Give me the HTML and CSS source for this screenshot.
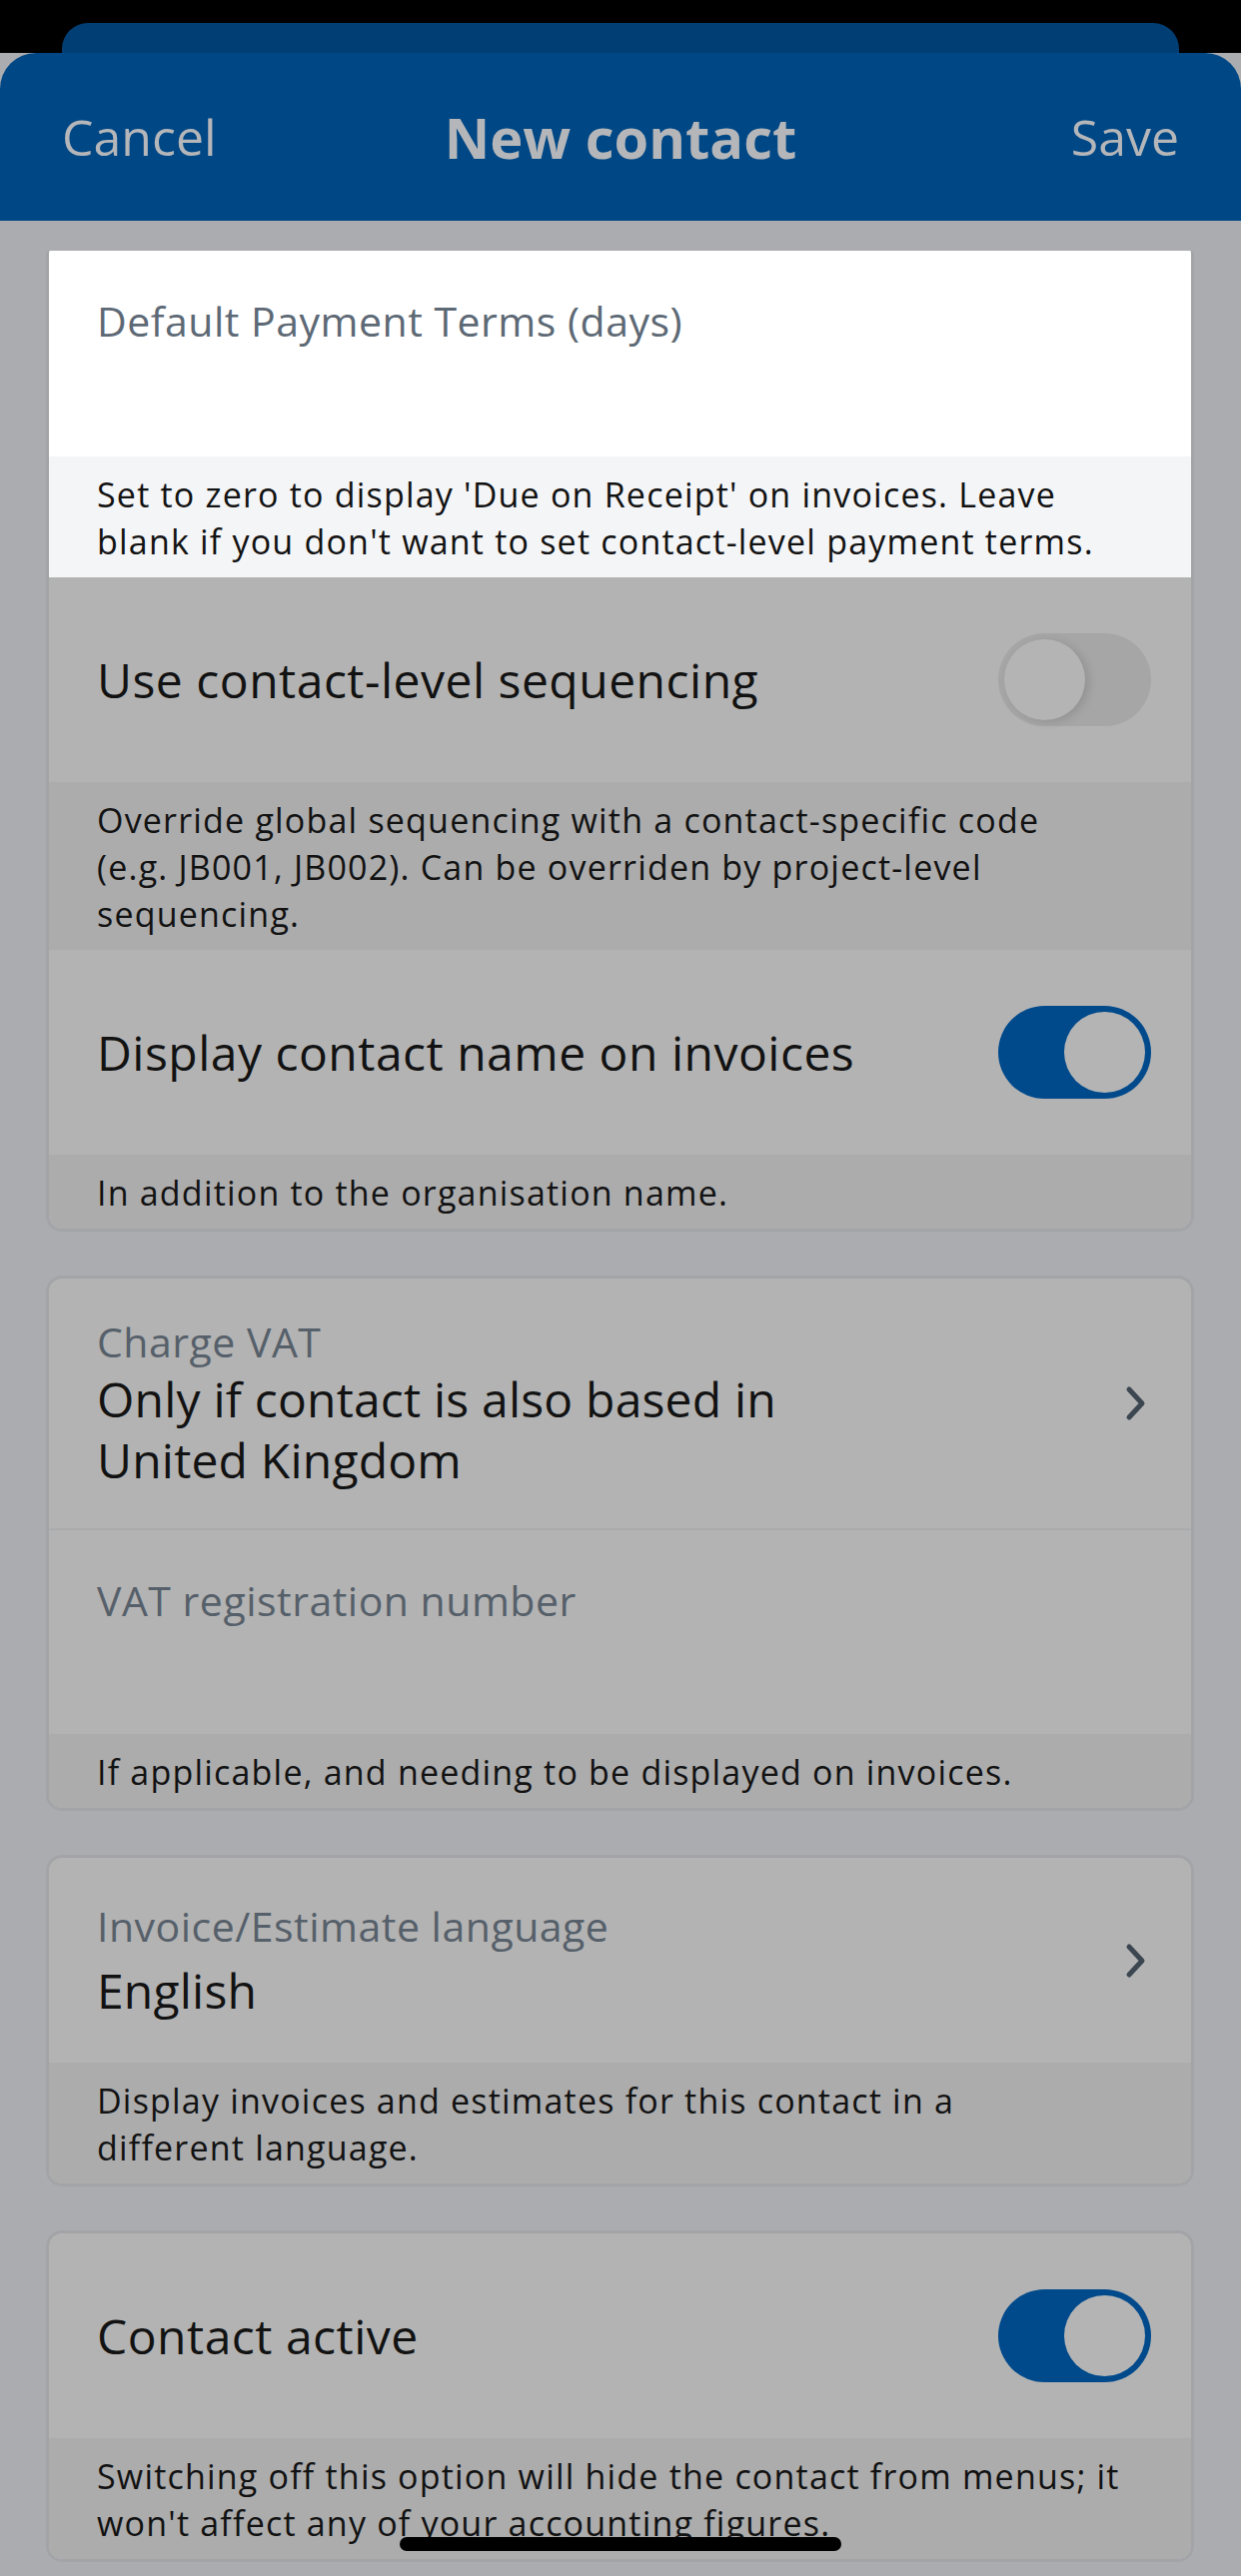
FILE: index.html
```html
<!doctype html>
<html lang="en">

<head>
  <meta charset="UTF-8" />
  <meta name="viewport" content="width=device-width, initial-scale=1.0" />
  <title>New contact</title>
  <link rel="stylesheet" href="styles.css">
</head>

<body>
  <div class="status-area">
    <div class="sheet-behind"></div>
  </div>

  <header class="nav">
    <span class="nav-btn">Cancel</span>
    <h1>New contact</h1>
    <span class="nav-btn nav-btn-end">Save</span>
  </header>

  <main class="form">
    <section class="card">
      <div class="field focused">
        <label>Default Payment Terms (days)</label>
      </div>
      <p class="hint focused">Set to zero to display 'Due on Receipt' on invoices. Leave<br>blank if you don't want to set contact-level payment terms.</p>

      <div class="row">
        <span class="row-title">Use contact-level sequencing</span>
        <span class="switch"></span>
      </div>
      <p class="hint">Override global sequencing with a contact-specific code<br>(e.g. JB001, JB002). Can be overriden by project-level<br>sequencing.</p>

      <div class="row">
        <span class="row-title">Display contact name on invoices</span>
        <span class="switch on"></span>
      </div>
      <p class="hint">In addition to the organisation name.</p>
    </section>

    <section class="card">
      <div class="row select tall">
        <div class="select-text">
          <span class="field-label">Charge VAT</span>
          <span class="select-value">Only if contact is also based in<br>United Kingdom</span>
        </div>
        <svg class="chevron" viewBox="0 0 22 36">
          <path d="M4 4l13 14L4 32" />
        </svg>
      </div>
      <div class="field divided">
        <label>VAT registration number</label>
      </div>
      <p class="hint">If applicable, and needing to be displayed on invoices.</p>
    </section>

    <section class="card">
      <div class="row select">
        <div class="select-text">
          <span class="field-label">Invoice/Estimate language</span>
          <span class="select-value">English</span>
        </div>
        <svg class="chevron" viewBox="0 0 22 36">
          <path d="M4 4l13 14L4 32" />
        </svg>
      </div>
      <p class="hint">Display invoices and estimates for this contact in a<br>different language.</p>
    </section>

    <section class="card">
      <div class="row">
        <span class="row-title">Contact active</span>
        <span class="switch on"></span>
      </div>
      <p class="hint">Switching off this option will hide the contact from menus; it<br>won't affect any of your accounting figures.</p>
    </section>
  </main>

  <div class="home-indicator"></div>
</body>

</html>
```

FILE: styles.css
```css
:root {
  --page-bg: #abacb0;
  --card-bg: #b3b3b3;
  --card-border: #a3a4a7;
  --hint-bg: #acacad;
  --nav-bg: #004785;
  --nav-behind: #003e73;
  --nav-text: #b4b6b9;
  --text: #121212;
  --label: #56606a;
  --switch-on: #004a8c;
  --switch-off: #a6a6a6;
  --knob: #b4b4b4;
}

* {
  margin: 0;
  padding: 0;
  box-sizing: border-box;
}

html {
  background: var(--page-bg);
}

body {
  width: 1242px;
  min-height: 2579px;
  font-family: "Open Sans", Lato, sans-serif;
  color: var(--text);
  background: var(--page-bg);
  position: relative;
  overflow: hidden;
}

/* black strip with the card stacked behind the sheet */
.status-area {
  height: 53px;
  background: #000;
  padding: 23px 62px 0;
}

.sheet-behind {
  height: 60px;
  background: var(--nav-behind);
  border-radius: 26px 26px 0 0;
}

.nav {
  position: relative;
  height: 168px;
  background: var(--nav-bg);
  border-radius: 36px 36px 0 0;
  display: grid;
  grid-template-columns: 1fr auto 1fr;
  align-items: center;
  padding: 0 62px;
  color: var(--nav-text);
}

.nav h1 {
  font-size: 56px;
  font-weight: 700;
}

.nav-btn {
  font-size: 50px;
  font-weight: 400;
}

.nav-btn-end {
  justify-self: end;
}

.form {
  display: flex;
  flex-direction: column;
  gap: 44px;
  padding: 30px 47px 0 46px;
}

.card {
  background: var(--card-bg);
  border: 3px solid var(--card-border);
  border-radius: 16px;
  overflow: hidden;
}

.card:first-child {
  border-top: none;
  border-radius: 4px 4px 16px 16px;
}

.field {
  height: 206px;
  padding: 45px 36px 0 48px;
}

.field label,
.field-label {
  display: block;
  font-size: 41px;
  line-height: 50px;
  letter-spacing: 0.5px;
  color: var(--label);
}

.field.focused {
  background: #fff;
}

.field.focused label {
  color: #5d6975;
}

.field.divided {
  border-top: 2px solid #aaabad;
}

.hint {
  background: var(--hint-bg);
  font-size: 34px;
  line-height: 47px;
  letter-spacing: 1.2px;
  padding: 15px 20px 12px 48px;
}

.hint.focused {
  background: #f4f5f7;
}

.row {
  min-height: 205px;
  display: flex;
  align-items: center;
  justify-content: space-between;
  padding: 0 40px 0 48px;
}

.row.tall {
  padding-top: 38px;
  padding-bottom: 38px;
}

.row-title {
  font-size: 48px;
  letter-spacing: 0.5px;
}

.select-text {
  display: flex;
  flex-direction: column;
  gap: 9px;
}

.tall .select-text {
  gap: 2px;
}

.select-value {
  font-size: 48px;
  line-height: 61px;
  letter-spacing: 0.2px;
}

.chevron {
  width: 22px;
  height: 36px;
  margin-right: 4px;
  fill: none;
  stroke: #3c4650;
  stroke-width: 5;
  stroke-linecap: round;
  stroke-linejoin: round;
}

/* iOS style switch */
.switch {
  width: 153px;
  height: 93px;
  border-radius: 47px;
  background: var(--switch-off);
  position: relative;
  flex-shrink: 0;
}

.switch::after {
  content: '';
  position: absolute;
  top: 6px;
  left: 6px;
  width: 81px;
  height: 81px;
  border-radius: 50%;
  background: var(--knob);
  box-shadow: 4px 2px 10px rgba(0, 0, 0, 0.12);
}

.switch.on {
  background: var(--switch-on);
}

.switch.on::after {
  left: 66px;
  box-shadow: none;
}

.home-indicator {
  position: absolute;
  left: 400px;
  top: 2540px;
  width: 442px;
  height: 14px;
  border-radius: 7px;
  background: #000;
}
```
